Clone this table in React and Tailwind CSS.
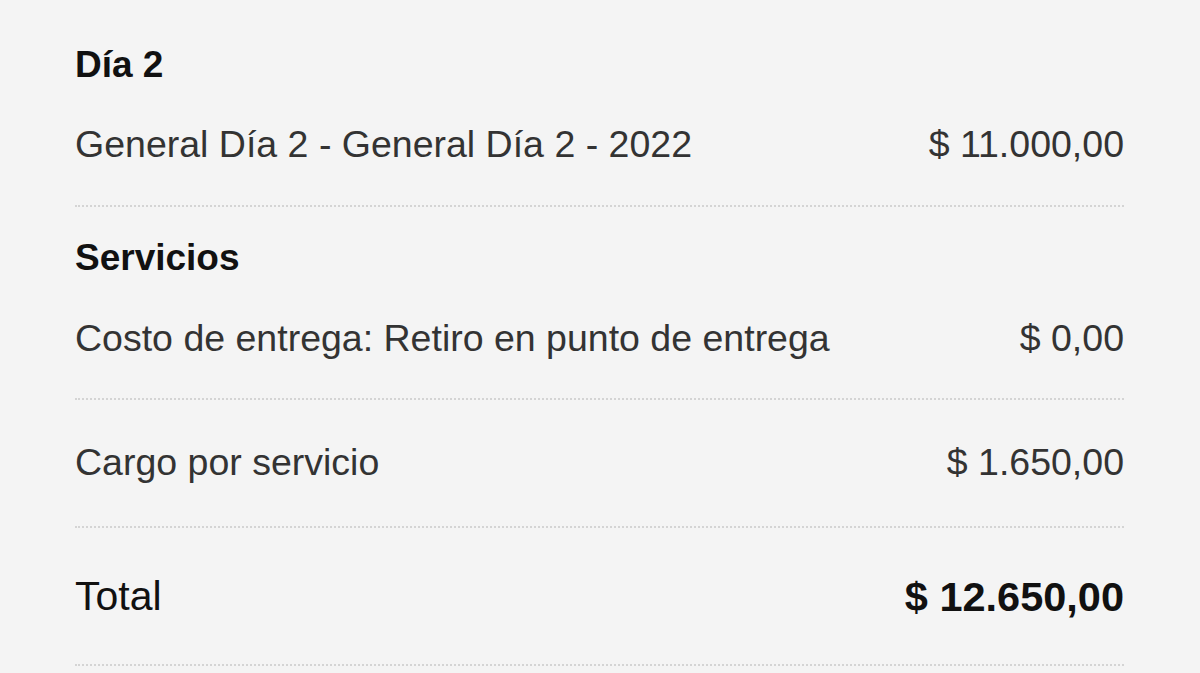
const font = { fontFamily: '"Liberation Sans", Arial, sans-serif' }

function Row({ label, amount, className = '' }) {
  return (
    <div className={`flex items-start justify-between text-[37.5px] leading-none text-[#333333] ${className}`}>
      <span>{label}</span>
      <span>{amount}</span>
    </div>
  )
}

function Dots({ className = '' }) {
  return <div className={`border-t-2 border-dotted border-[#d4d4d4] ${className}`} />
}

export default function App() {
  return (
    <div className="w-[1200px] h-[673px] overflow-hidden bg-[#f4f4f4]" style={font}>
      <div className="pl-[75px] pr-[76px] pt-[46px]">
        <h3 className="text-[37px] leading-none font-bold text-[#111111]">Día 2</h3>
        <Row className="mt-[43px]" label="General Día 2 - General Día 2 - 2022" amount="$ 11.000,00" />
        <Dots className="mt-[41px]" />

        <h3 className="mt-[32px] text-[37px] leading-none font-bold text-[#111111]">Servicios</h3>
        <Row className="mt-[44px]" label="Costo de entrega: Retiro en punto de entrega" amount="$ 0,00" />
        <Dots className="mt-[41px]" />
        <Row className="mt-[44px]" label="Cargo por servicio" amount="$ 1.650,00" />
        <Dots className="mt-[44px]" />

        <div className="mt-[48px] flex items-start justify-between leading-none text-[#111111]">
          <span className="text-[41px]">Total</span>
          <span className="text-[41.5px] font-bold">$ 12.650,00</span>
        </div>
        <Dots className="mt-[47px]" />
      </div>
    </div>
  )
}
